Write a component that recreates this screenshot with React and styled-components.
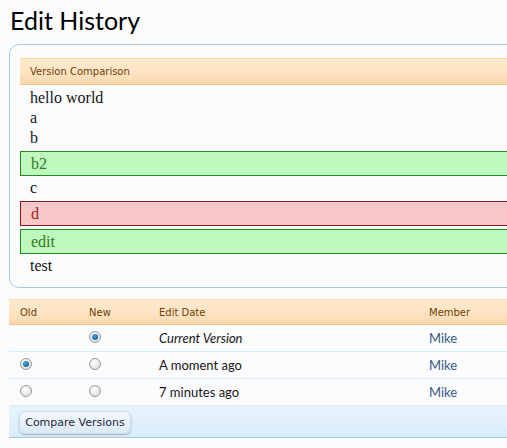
import styled, { createGlobalStyle, css } from "styled-components";

const GlobalStyle = createGlobalStyle`
  html, body {
    margin: 0;
    background: #fcfcff;
    overflow-x: hidden;
  }
  body {
    font-family: Lato, "Open Sans", sans-serif;
    color: #141414;
  }
`;

const Page = styled.div`
  width: 640px;
  padding: 0 0 0 9px;
`;

const Title = styled.h1`
  margin: 0;
  padding: 5px 0 0 1px;
  height: 39px;
  font-size: 25px;
  font-weight: 400;
  color: #000;
`;

const Panel = styled.div`
  border: 1px solid #a5cae4;
  border-radius: 10px;
  padding: 13px 0 11px 10px;
`;

const HeadBar = styled.div`
  height: 25px;
  line-height: 25px;
  padding-left: 10px;
  font-family: "DejaVu Sans", sans-serif;
  font-size: 10px;
  color: #6d3f03;
  background: linear-gradient(#fee9cd, #fde3c3 60%, #f8d6ac);
  border-top: 1px solid #f9d9b0;
  border-bottom: 1px solid #f6c184;
  margin-bottom: 3px;
`;

const variants = {
  plain: css``,
  insert: css`
    background: #bff8bf;
    border: 1px solid #228b22;
    color: #2f7a20;
    line-height: 23px;
    margin: 3px 0 2px;
  `,
  remove: css`
    background: #f8c8c8;
    border: 1px solid #8b1a1a;
    color: #a02020;
    line-height: 23px;
    margin: 3px 0 2px;
  `,
};

const Line = styled.div`
  font-family: "Liberation Serif", serif;
  font-size: 16px;
  line-height: 20px;
  padding: 0 10px;
  ${({ $kind }) => variants[$kind]}
`;

const Table = styled.div`
  margin-top: 11px;
`;

const Row = styled.div`
  display: grid;
  grid-template-columns: 69px 70px 270px 1fr;
  align-items: center;
  padding-left: 11px;
  height: 26px;
  border-bottom: 1px solid #d7edfc;
  font-size: 13px;
`;

const HeadRow = styled(Row)`
  height: 24px;
  font-family: "DejaVu Sans", sans-serif;
  font-size: 10px;
  color: #6d3f03;
  background: linear-gradient(#fee9cd, #fde3c3 60%, #f8d6ac);
  border-top: 1px solid #f9d9b0;
  border-bottom: 1px solid #f6c184;
`;

const DateCell = styled.span`
  font-style: ${({ $italic }) => ($italic ? "italic" : "normal")};
`;

const Member = styled.span`
  color: #375a7f;
`;

const Radio = styled.span`
  display: block;
  width: 10px;
  height: 10px;
  border-radius: 50%;
  border: 1px solid #9a9a9a;
  background: radial-gradient(circle at 40% 35%, #fff, #e2e2e2 70%, #cfcfcf);
  position: relative;
  margin-top: -3px;
  ${({ $checked }) =>
    $checked &&
    css`
      &::after {
        content: "";
        position: absolute;
        left: 2px;
        top: 2px;
        width: 6px;
        height: 6px;
        border-radius: 50%;
        background: radial-gradient(circle at 40% 35%, #4aa6e0, #0b5e9a 80%);
      }
    `}
`;

const Footer = styled.div`
  height: 31px;
  display: flex;
  align-items: center;
  padding-left: 10px;
  background: linear-gradient(#e8f4fc, #d9ecfa);
  border-bottom: 1px solid #a5cae4;
`;

const Button = styled.button`
  font-family: "DejaVu Sans", sans-serif;
  font-size: 11px;
  color: #1e1e3c;
  height: 23px;
  width: 112px;
  padding: 0;
  border: 1px solid #c8dcec;
  border-radius: 6px;
  background: linear-gradient(#f4f9fe, #dbeaf6);
  box-shadow: 0 1px 2px rgba(0, 0, 0, 0.25);
  margin-top: 1px;
`;

const lines = [
  { text: "hello world", kind: "plain" },
  { text: "a", kind: "plain" },
  { text: "b", kind: "plain" },
  { text: "b2", kind: "insert" },
  { text: "c", kind: "plain" },
  { text: "d", kind: "remove" },
  { text: "edit", kind: "insert" },
  { text: "test", kind: "plain" },
];

const versions = [
  { old: null, new: true, date: "Current Version", current: true },
  { old: true, new: false, date: "A moment ago" },
  { old: false, new: false, date: "7 minutes ago" },
];

export default function App() {
  return (
    <Page>
      <GlobalStyle />
      <Title>Edit History</Title>
      <Panel>
        <HeadBar>Version Comparison</HeadBar>
        {lines.map((l, i) => (
          <Line key={i} $kind={l.kind}>
            {l.text}
          </Line>
        ))}
      </Panel>
      <Table>
        <HeadRow>
          <span>Old</span>
          <span>New</span>
          <span>Edit Date</span>
          <span>Member</span>
        </HeadRow>
        {versions.map((v, i) => (
          <Row key={i}>
            <span>{v.old !== null && <Radio $checked={v.old} />}</span>
            <span>
              <Radio $checked={v.new} />
            </span>
            <DateCell $italic={v.current}>{v.date}</DateCell>
            <Member>Mike</Member>
          </Row>
        ))}
        <Footer>
          <Button>Compare Versions</Button>
        </Footer>
      </Table>
    </Page>
  );
}
